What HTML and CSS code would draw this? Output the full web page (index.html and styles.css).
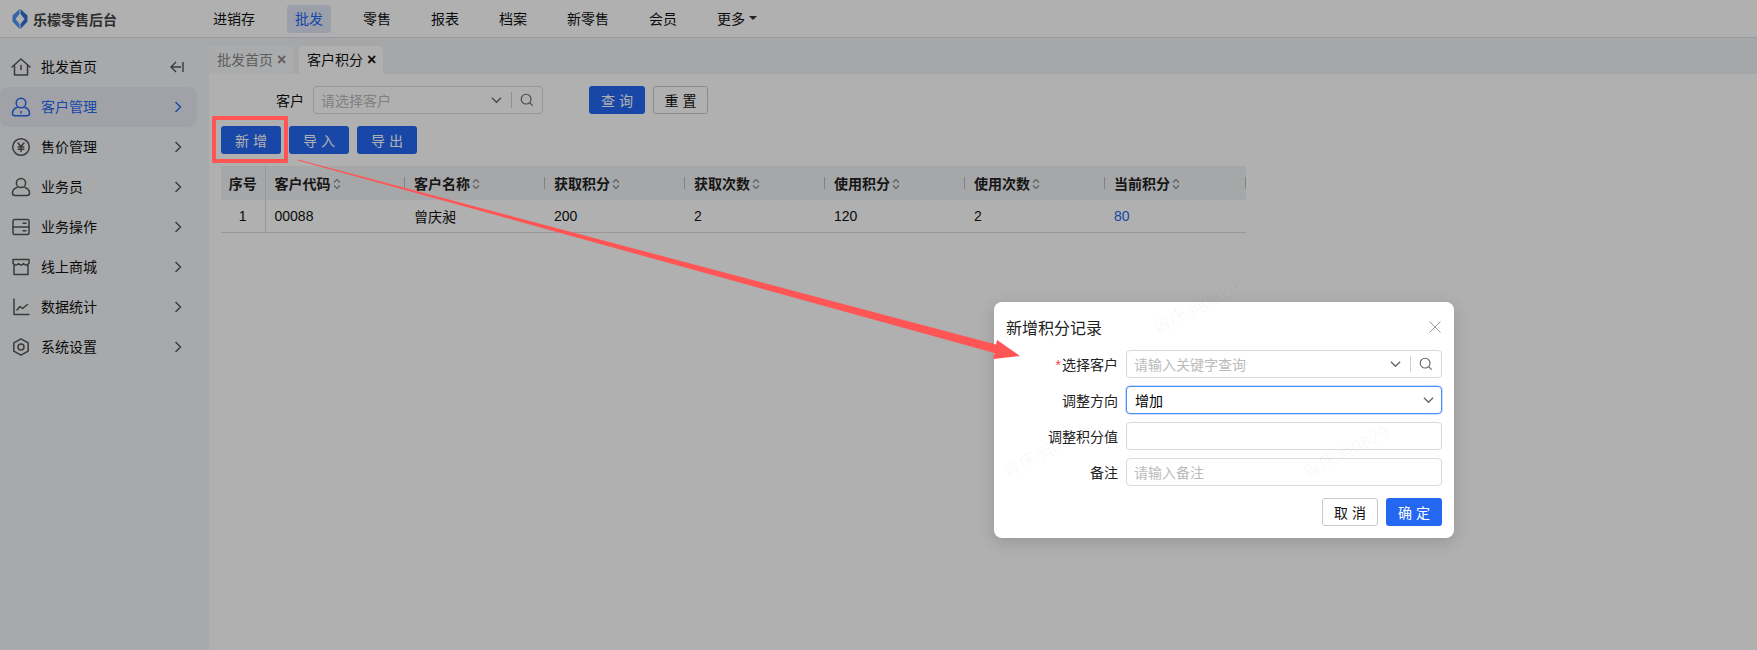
FILE: index.html
```html
<!DOCTYPE html>
<html lang="zh-CN">
<head>
<meta charset="utf-8">
<title>乐檬零售后台</title>
<link rel="stylesheet" href="styles.css">
</head>
<body>
<div class="app">
  <header class="topbar">
    <div class="brand">
      <svg class="brand-logo" viewBox="0 0 16 20" width="16" height="20"><path d="M8.5 0 L15.5 6.5 L15.5 12.5 L8.5 20 L8.5 15 L12.5 10 L8.5 5 Z" fill="#2f6fd8"/><path d="M7.5 0 L0.5 6.5 L0.5 12.5 L7.5 20 L7.5 15 L3.5 10 L7.5 5 Z" fill="#4f94f0"/></svg>
      <span class="brand-name">乐檬零售后台</span>
    </div>
    <nav class="topnav">
      <a class="nav-item">进销存</a>
      <a class="nav-item nav-active">批发</a>
      <a class="nav-item">零售</a>
      <a class="nav-item">报表</a>
      <a class="nav-item">档案</a>
      <a class="nav-item">新零售</a>
      <a class="nav-item">会员</a>
      <a class="nav-item">更多<i class="caret"></i></a>
    </nav>
  </header>
  <div class="body">
    <aside class="sidebar">
      <div class="menu-item">
        <svg class="menu-icon" viewBox="0 0 20 20"><path d="M1 10 L10 2 L19 10 M3.5 8.5 V18 H16.5 V8.5 M10 8.5 V12.5" /></svg>
        <span class="menu-text">批发首页</span>
        <svg class="collapse" viewBox="0 0 14 12"><path d="M6 1 L1 6 L6 11 M1 6 H11 M13 1 V11"/></svg>
      </div>
      <div class="menu-item menu-active">
        <svg class="menu-icon" viewBox="0 0 20 20"><circle cx="10" cy="6" r="4.8"/><path d="M6 10.5 C2.5 11.5 1.5 14 1.5 16.5 C1.5 18 2.5 18.8 4 18.8 H16 C17.5 18.8 18.5 18 18.5 16.5 C18.5 14 17.5 11.5 14 10.5 M10 14.5 V16"/></svg>
        <span class="menu-text">客户管理</span>
        <svg class="chev" viewBox="0 0 8 12"><path d="M1.5 1 L6.5 6 L1.5 11"/></svg>
      </div>
      <div class="menu-item">
        <svg class="menu-icon" viewBox="0 0 20 20"><circle cx="10" cy="10" r="8.3"/><path d="M7 6 L10 9.5 L13 6 M10 9.5 V14.5 M7.2 10 H12.8 M7.2 12.3 H12.8"/></svg>
        <span class="menu-text">售价管理</span>
        <svg class="chev" viewBox="0 0 8 12"><path d="M1.5 1 L6.5 6 L1.5 11"/></svg>
      </div>
      <div class="menu-item">
        <svg class="menu-icon" viewBox="0 0 20 20"><circle cx="10" cy="6" r="4.6"/><path d="M6 10.5 C3 11.5 1.5 13.5 1.5 16 C1.5 17.8 2.5 18.5 4 18.5 H16 C17.5 18.5 18.5 17.8 18.5 16 C18.5 13.5 17 11.5 14 10.5"/></svg>
        <span class="menu-text">业务员</span>
        <svg class="chev" viewBox="0 0 8 12"><path d="M1.5 1 L6.5 6 L1.5 11"/></svg>
      </div>
      <div class="menu-item">
        <svg class="menu-icon" viewBox="0 0 20 20"><rect x="2" y="2.5" width="16" height="15" rx="1.5"/><path d="M2 10 H18 M12 6.2 H15 M12 13.8 H15"/></svg>
        <span class="menu-text">业务操作</span>
        <svg class="chev" viewBox="0 0 8 12"><path d="M1.5 1 L6.5 6 L1.5 11"/></svg>
      </div>
      <div class="menu-item">
        <svg class="menu-icon" viewBox="0 0 20 20"><path d="M3 7 V17.5 H17 V7 M2 2.5 H18 V6.5 C16 8.5 14 8.5 12.5 6.5 C11 8.5 9 8.5 7.5 6.5 C6 8.5 4 8.5 2 6.5 Z"/></svg>
        <span class="menu-text">线上商城</span>
        <svg class="chev" viewBox="0 0 8 12"><path d="M1.5 1 L6.5 6 L1.5 11"/></svg>
      </div>
      <div class="menu-item">
        <svg class="menu-icon" viewBox="0 0 20 20"><path d="M3 2 V17.5 H18 M6 13 L9 9.5 L11.5 11.5 L16.5 7.5"/></svg>
        <span class="menu-text">数据统计</span>
        <svg class="chev" viewBox="0 0 8 12"><path d="M1.5 1 L6.5 6 L1.5 11"/></svg>
      </div>
      <div class="menu-item">
        <svg class="menu-icon" viewBox="0 0 20 20"><path d="M10 1.8 L17.2 5.9 V14.1 L10 18.2 L2.8 14.1 V5.9 Z"/><circle cx="10" cy="10" r="3"/></svg>
        <span class="menu-text">系统设置</span>
        <svg class="chev" viewBox="0 0 8 12"><path d="M1.5 1 L6.5 6 L1.5 11"/></svg>
      </div>
    </aside>
    <main class="main">
      <div class="tabs">
        <div class="tab">批发首页<span class="tab-x">×</span></div>
        <div class="tab tab-active">客户积分<span class="tab-x">×</span></div>
      </div>
      <div class="content">
        <div class="query">
          <label class="query-label">客户</label>
          <div class="field query-field">
            <span class="placeholder field-text">请选择客户</span>
            <svg class="field-chev" viewBox="0 0 12 8"><path d="M1 1.5 L6 6.5 L11 1.5"/></svg>
            <i class="field-sep"></i>
            <svg class="field-search" viewBox="0 0 16 16"><circle cx="7" cy="7" r="5.6"/><path d="M11 11 L14.5 14.5"/></svg>
          </div>
          <button class="btn btn-primary btn-query">查询</button>
          <button class="btn btn-default btn-reset">重置</button>
        </div>
        <div class="actions">
          <button class="btn btn-primary">新增</button>
          <button class="btn btn-primary">导入</button>
          <button class="btn btn-primary">导出</button>
        </div>
        <table class="grid">
          <thead>
            <tr>
              <th class="col-no">序号</th>
              <th class="col">客户代码<svg class="sort" viewBox="0 0 8 12"><path d="M1 4.5 L4 1.5 L7 4.5 M1 7.5 L4 10.5 L7 7.5"/></svg></th>
              <th class="col">客户名称<svg class="sort" viewBox="0 0 8 12"><path d="M1 4.5 L4 1.5 L7 4.5 M1 7.5 L4 10.5 L7 7.5"/></svg></th>
              <th class="col">获取积分<svg class="sort" viewBox="0 0 8 12"><path d="M1 4.5 L4 1.5 L7 4.5 M1 7.5 L4 10.5 L7 7.5"/></svg></th>
              <th class="col">获取次数<svg class="sort" viewBox="0 0 8 12"><path d="M1 4.5 L4 1.5 L7 4.5 M1 7.5 L4 10.5 L7 7.5"/></svg></th>
              <th class="col">使用积分<svg class="sort" viewBox="0 0 8 12"><path d="M1 4.5 L4 1.5 L7 4.5 M1 7.5 L4 10.5 L7 7.5"/></svg></th>
              <th class="col">使用次数<svg class="sort" viewBox="0 0 8 12"><path d="M1 4.5 L4 1.5 L7 4.5 M1 7.5 L4 10.5 L7 7.5"/></svg></th>
              <th class="col col-last">当前积分<svg class="sort" viewBox="0 0 8 12"><path d="M1 4.5 L4 1.5 L7 4.5 M1 7.5 L4 10.5 L7 7.5"/></svg></th>
            </tr>
          </thead>
          <tbody>
            <tr>
              <td class="col-no">1</td>
              <td class="col">00088</td>
              <td class="col">曾庆昶</td>
              <td class="col">200</td>
              <td class="col">2</td>
              <td class="col">120</td>
              <td class="col">2</td>
              <td class="col link">80</td>
            </tr>
          </tbody>
        </table>
      </div>
    </main>
  </div>

  <div class="overlay"></div>

  <section class="modal">
    <div class="modal-head">
      <h2 class="modal-title">新增积分记录</h2>
      <svg class="modal-close" viewBox="0 0 12 12"><path d="M0.5 0.5 L11.5 11.5 M11.5 0.5 L0.5 11.5"/></svg>
    </div>
    <div class="form">
      <div class="form-row">
        <label class="form-label"><span class="req">*</span>选择客户</label>
        <div class="field">
          <span class="placeholder field-text">请输入关键字查询</span>
          <svg class="field-chev" viewBox="0 0 12 8"><path d="M1 1.5 L6 6.5 L11 1.5"/></svg>
          <i class="field-sep"></i>
          <svg class="field-search" viewBox="0 0 16 16"><circle cx="7" cy="7" r="5.6"/><path d="M11 11 L14.5 14.5"/></svg>
        </div>
      </div>
      <div class="form-row">
        <label class="form-label">调整方向</label>
        <div class="field field-focus">
          <span class="field-text">增加</span>
          <svg class="field-chev field-chev-end" viewBox="0 0 12 8"><path d="M1 1.5 L6 6.5 L11 1.5"/></svg>
        </div>
      </div>
      <div class="form-row">
        <label class="form-label">调整积分值</label>
        <div class="field"></div>
      </div>
      <div class="form-row">
        <label class="form-label">备注</label>
        <div class="field"><span class="placeholder field-text">请输入备注</span></div>
      </div>
    </div>
    <div class="modal-foot">
      <button class="btn btn-default">取消</button>
      <button class="btn btn-confirm">确定</button>
    </div>
  </section>

  <div class="wm wm-a">曾庆昶0829</div>
  <div class="wm wm-b">曾庆昶0829</div>
  <div class="wm wm-c">曾庆昶0829</div>

  <div class="callout-box"></div>
  <svg class="callout-arrow" viewBox="0 0 1757 650" width="1757" height="650"><polygon points="298,159.5 996,344.5 997,340 1020,356 993,359 994.5,353 298,160.5"/></svg>
</div>
</body>
</html>
```
FILE: styles.css
```css
* { box-sizing: border-box; }
html, body { margin: 0; padding: 0; height: 100%; }
body {
  font-family: "Liberation Sans", "Noto Sans CJK SC", sans-serif;
  font-size: 14px;
  color: #111;
  background: #fff;
  overflow: hidden;
}
.app { position: relative; width: 1757px; height: 650px; overflow: hidden; display: flex; flex-direction: column; }

.topbar { height: 38px; display: flex; align-items: center; background: #fff; border-bottom: 1px solid #dcdfe6; flex: none; }
.brand { width: 205px; display: flex; align-items: center; padding-left: 12px; height: 36px; }
.brand-logo { flex: none; margin-right: 5px; }
.brand-name { font-weight: 700; color: #444; font-size: 14px; }
.topnav { display: flex; gap: 24px; align-items: center; }
.nav-item { padding: 0 8px; height: 28px; line-height: 28px; border-radius: 4px; color: #111; display: flex; align-items: center; }
.nav-active { background: #dfe6f6; color: #2468f2; }
.caret { width: 0; height: 0; margin-left: 4px; margin-top: -2px; border-left: 4px solid transparent; border-right: 4px solid transparent; border-top: 4px solid #333; }

.body { display: flex; flex: 1; min-height: 0; }
.sidebar { width: 209px; flex: none; background: #f3f5f8; padding-top: 9px; }
.menu-item { width: 197px; height: 40px; display: flex; align-items: center; padding-left: 11px; border-radius: 0 8px 8px 0; }
.menu-icon { width: 20px; height: 20px; fill: none; stroke: #555; stroke-width: 1.5; stroke-linejoin: round; stroke-linecap: round; flex: none; margin-right: 10px; }
.menu-text { flex: 1; color: #111; padding-bottom: 2px; }
.chev { width: 8px; height: 12px; fill: none; stroke: #555; stroke-width: 1.4; margin-right: 15px; flex: none; }
.collapse { width: 14px; height: 12px; fill: none; stroke: #555; stroke-width: 1.4; margin-right: 13px; flex: none; }
.menu-active { background: #e8ebf3; border-radius: 8px; }
.menu-active .menu-icon, .menu-active .chev { stroke: #2468f2; }
.menu-active .menu-text { color: #2468f2; }

.main { flex: 1; min-width: 0; }
.tabs { height: 36px; background: #f0f2f5; display: flex; gap: 6px; padding-top: 8px; }
.tab { width: 84px; height: 28px; background: #f7f8fa; color: #888; border-radius: 4px 4px 0 0; padding-left: 8px; line-height: 28px; white-space: nowrap; }
.tab-x { margin-left: 4px; color: #888; font-size: 16px; font-weight: 700; }
.tab-active { background: #fff; color: #111; }
.tab-active .tab-x { color: #111; }

.content { padding: 12px 0 0 12px; }
.query { display: flex; align-items: center; height: 28px; }
.query-label { width: 83px; text-align: right; margin-right: 9px; }
.btn { height: 28px; width: 60px; padding: 0; border-radius: 3px; border: 1px solid transparent; font: inherit; letter-spacing: 4px; text-indent: 4px; cursor: pointer; display: block; }
.btn-primary { background: #2468f2; color: #fff; }
.btn-default { background: #fff; color: #111; border-color: #c9c9c9; width: 56px; }
.btn-confirm { background: #2468f2; color: #fff; width: 56px; }
.btn-query { width: 56px; margin-left: 46px; }
.btn-reset { width: 55px; margin-left: 8px; }
.actions { display: flex; gap: 8px; margin-top: 12px; }

.grid { margin-top: 12px; width: 1025px; border-collapse: collapse; table-layout: fixed; }
.grid th { height: 34px; background: #f0f2f5; font-weight: 700; text-align: left; position: relative; color: #222; white-space: nowrap; }
.grid td { height: 32px; border-bottom: 1px solid #dcdcdc; color: #111; }
.col-no { width: 44px; text-align: center !important; padding: 0; border-right: 1px solid #dcdcdc; }
.col { width: 140px; padding: 0 0 0 9px; }
.grid th.col::after { content: ""; position: absolute; right: 0; top: 11px; width: 1px; height: 12px; background: #bbb; }
.col-last { width: 141px; }
.sort { width: 8px; height: 12px; margin-left: 2px; vertical-align: -1px; fill: none; stroke: #888; stroke-width: 1.2; }
.link { color: #2468f2 !important; }

.overlay { position: absolute; inset: 0; background: rgba(0, 0, 0, 0.31); }

.modal { position: absolute; left: 994px; top: 302px; width: 460px; height: 236px; background: #fff; border-radius: 8px; padding: 13px 12px 12px; box-shadow: 0 4px 16px rgba(0, 0, 0, 0.15); }
.modal-head { display: flex; align-items: center; justify-content: space-between; height: 24px; }
.modal-title { margin: 0; font-size: 16px; font-weight: 400; color: #222; }
.modal-close { width: 12px; height: 12px; margin-right: 1px; margin-top: -1px; fill: none; stroke: #999; stroke-width: 1; }
.form { display: flex; flex-direction: column; gap: 8px; margin-top: 11px; }
.form-row { display: flex; align-items: center; height: 28px; }
.form-label { width: 112px; margin-right: 8px; text-align: right; color: #222; flex: none; }
.req { color: #f5444c; margin-right: 1px; }
.modal-foot { display: flex; justify-content: flex-end; gap: 8px; margin-top: 12px; }

.field { flex: 1; height: 28px; border: 1px solid #d9d9d9; border-radius: 4px; display: flex; align-items: center; background: #fff; padding: 0 8px 0 7px; }
.query .query-field { flex: none; width: 230px; }
.field-text { flex: 1; white-space: nowrap; }
.placeholder { color: #bbb; }
.field-chev { width: 11px; height: 8px; fill: none; stroke: #666; stroke-width: 1.4; flex: none; }
.field-sep { width: 1px; height: 16px; background: #d0d0d0; margin: 0 8px 0 9px; flex: none; }
.field-search { width: 14px; height: 14px; fill: none; stroke: #666; stroke-width: 1.3; flex: none; }
.field-focus { border-color: #4f8df7; box-shadow: 0 0 0 1px rgba(79, 141, 247, 0.3); color: #000; padding-left: 8px; }
.field-chev-end { margin-right: -1px; }

.wm { position: absolute; font-size: 18px; color: rgba(0, 0, 0, 0.035); transform: rotate(-27deg); white-space: nowrap; pointer-events: none; }
.wm-a { left: 1148px; top: 293px; }
.wm-b { left: 998px; top: 437px; }
.wm-c { left: 1298px; top: 437px; }

.callout-box { position: absolute; left: 212px; top: 116px; width: 76px; height: 47px; border: 4px solid #ff5555; border-radius: 1px; }
.callout-arrow { position: absolute; left: 0; top: 0; pointer-events: none; }
.callout-arrow polygon { fill: #ff5555; }
```
